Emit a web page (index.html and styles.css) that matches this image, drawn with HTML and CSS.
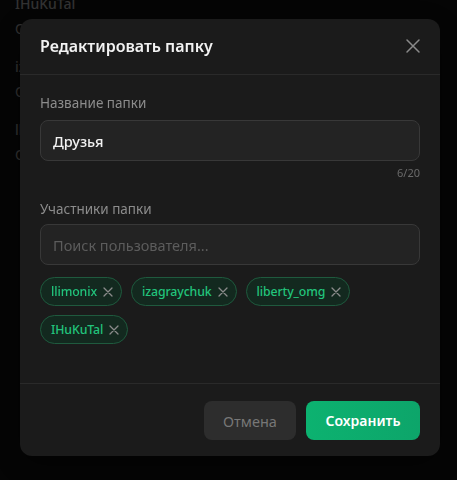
FILE: index.html
```html
<!DOCTYPE html>
<html lang="ru">
<head>
<meta charset="utf-8">
<link rel="stylesheet" href="styles.css">
</head>
<body>
<div class="page">
  <ul class="list">
    <li class="row"><span class="name">IHuKuTal</span><span class="sub">Онлайн</span></li>
    <li class="row"><span class="name">izagraychuk</span><span class="sub">Офлайн</span></li>
    <li class="row"><span class="name">llimonix</span><span class="sub">Онлайн</span></li>
  </ul>
</div>
<div class="overlay">
  <div class="modal">
    <div class="modal-head">
      <h2 class="title">Редактировать папку</h2>
      <button class="close" aria-label="Закрыть">
        <svg width="16" height="16" viewBox="0 0 16 16"><path d="M2 2L14 14M14 2L2 14" stroke="currentColor" stroke-width="1.5" stroke-linecap="round"/></svg>
      </button>
    </div>
    <div class="modal-body">
      <label class="label">Название папки</label>
      <div class="input filled">Друзья</div>
      <div class="counter">6/20</div>
      <label class="label label-2">Участники папки</label>
      <div class="input placeholder">Поиск пользователя...</div>
      <div class="chips">
        <span class="chip">llimonix<svg class="x" width="10" height="10" viewBox="0 0 10 10"><path d="M1 1L9 9M9 1L1 9" stroke="currentColor" stroke-width="1.3" stroke-linecap="round"/></svg></span>
        <span class="chip">izagraychuk<svg class="x" width="10" height="10" viewBox="0 0 10 10"><path d="M1 1L9 9M9 1L1 9" stroke="currentColor" stroke-width="1.3" stroke-linecap="round"/></svg></span>
        <span class="chip">liberty_omg<svg class="x" width="10" height="10" viewBox="0 0 10 10"><path d="M1 1L9 9M9 1L1 9" stroke="currentColor" stroke-width="1.3" stroke-linecap="round"/></svg></span>
        <span class="chip">IHuKuTal<svg class="x" width="10" height="10" viewBox="0 0 10 10"><path d="M1 1L9 9M9 1L1 9" stroke="currentColor" stroke-width="1.3" stroke-linecap="round"/></svg></span>
      </div>
    </div>
    <div class="modal-foot">
      <button class="btn cancel">Отмена</button>
      <button class="btn save">Сохранить</button>
    </div>
  </div>
</div>
</body>
</html>
```
FILE: styles.css
```css
* { box-sizing: border-box; }
html, body {
  margin: 0;
  padding: 0;
  width: 457px;
  height: 480px;
  overflow: hidden;
  background: #121212;
  font-family: "Noto Sans", "Open Sans", sans-serif;
}
.page {
  height: 480px;
  padding: 0 15px;
}
.list {
  list-style: none;
  margin: -6px 0 0;
  padding: 0;
}
.row {
  display: flex;
  flex-direction: column;
  height: 63px;
  justify-content: flex-start;
}
.name {
  font-size: 14px;
  font-weight: 500;
  color: #b4b4b4;
  line-height: 20px;
}
.sub {
  font-size: 14px;
  color: #b4b4b4;
  line-height: 22px;
  margin-top: 4px;
}
.overlay {
  position: fixed;
  inset: 0;
  background: rgba(0, 0, 0, 0.72);
  display: flex;
  align-items: flex-start;
  padding: 19px 0 0 20px;
}
.modal {
  width: 420px;
  height: 437px;
  background: #1b1b1b;
  border-radius: 12px;
  display: flex;
  flex-direction: column;
  box-shadow: 0 8px 30px rgba(0,0,0,0.5);
}
.modal-head {
  height: 56px;
  border-bottom: 1px solid #2a2a2a;
  display: flex;
  align-items: center;
  justify-content: space-between;
  padding: 0 20px 0 20px;
}
.title {
  margin: 0;
  font-size: 16px;
  font-weight: 600;
  color: #f2f2f2;
  padding-bottom: 2px;
}
.close {
  background: none;
  border: 0;
  padding: 0;
  color: #8a8a8a;
  display: flex;
  margin-right: -1px;
  margin-bottom: 2px;
}
.modal-body {
  flex: 1;
  padding: 19px 20px 0;
  display: flex;
  flex-direction: column;
  border-bottom: 1px solid #2a2a2a;
}
.label {
  font-size: 13.5px;
  color: #8c8c8c;
  line-height: 18px;
  margin-bottom: 8px;
}
.label-2 { margin-top: 19px; margin-bottom: 6px; }
.input {
  height: 41px;
  border: 1px solid #383838;
  border-radius: 8px;
  background: #232323;
  display: flex;
  align-items: center;
  padding: 0 12px;
  font-size: 14.5px;
}
.filled { color: #f2f2f2; font-weight: 500; }
.placeholder { color: #5c5c5c; }
.counter {
  text-align: right;
  font-size: 11px;
  color: #6a6a6a;
  line-height: 16px;
  margin-top: 4px;
}
.chips {
  display: flex;
  flex-wrap: wrap;
  gap: 9px 9px;
  margin-top: 12px;
}
.chip {
  height: 29px;
  display: inline-flex;
  align-items: center;
  gap: 6px;
  padding: 0 8px 0 10px;
  border-radius: 15px;
  background: #13291f;
  border: 1px solid #1f5a3e;
  color: #22c47c;
  font-size: 12.3px;
  font-weight: 500;
  letter-spacing: -0.1px;
}
.x { color: #8a8a8a; }
.modal-foot {
  height: 72px;
  display: flex;
  justify-content: flex-end;
  align-items: flex-start;
  gap: 10px;
  padding: 17px 20px 0;
}
.btn {
  height: 39px;
  border: 0;
  border-radius: 8px;
  font-family: inherit;
  font-size: 14.5px;
}
.cancel {
  width: 92px;
  background: #2d2d2d;
  color: #777;
}
.save {
  width: 114px;
  background: linear-gradient(90deg, #0cb270, #0da56a);
  color: #fff;
  font-weight: 600;
  font-size: 14px;
}
```
